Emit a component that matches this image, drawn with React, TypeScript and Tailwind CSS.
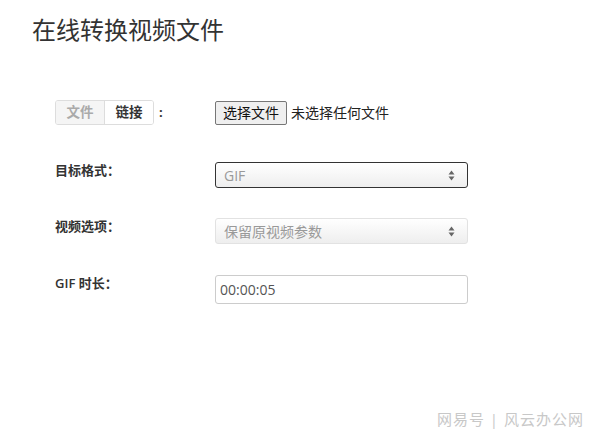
import React from "react";

const font = { fontFamily: '"Open Sans", "Noto Sans CJK SC", sans-serif' };

function Arrows() {
  return (
    <svg width="7" height="11" viewBox="0 0 7 11" className="shrink-0">
      <path d="M3.5 0.5 L6.5 4.5 L0.5 4.5 Z" fill="#666" />
      <path d="M3.5 10.5 L6.5 6.5 L0.5 6.5 Z" fill="#666" />
    </svg>
  );
}

export default function App() {
  return (
    <div className="w-[598px] h-[440px] bg-white relative overflow-hidden text-[#333]" style={font}>
      <h1 className="pl-[32px] pt-[14px] text-[24px] leading-[32px] font-normal text-[#333]">在线转换视频文件</h1>

      <div className="pl-[55px] pt-[54px] flex flex-col">
        {/* Row 1 */}
        <div className="flex items-center h-[25px]">
          <div className="w-[160px] flex items-center">
            <div className="flex h-[25px] border border-[#ddd] rounded-[3px] overflow-hidden text-[13.5px]">
              <div className="w-[49px] flex items-center justify-center bg-[#f5f5f5] text-[#aaa] font-bold border-r border-[#ddd]">文件</div>
              <div className="w-[48px] flex items-center justify-center bg-white text-[#333] font-bold">链接</div>
            </div>
            <span className="ml-[5px] text-[13px] font-bold">:</span>
          </div>
          <div className="flex items-center text-[14px]">
            <div className="h-[24px] w-[72px] flex items-center justify-center bg-[#efefef] border border-[#767676] rounded-[2px] text-[#111]">选择文件</div>
            <span className="ml-[4px] text-[#222]">未选择任何文件</span>
          </div>
        </div>

        {/* Row 2 */}
        <div className="flex items-start mt-[37px]">
          <div className="w-[160px] text-[13px] font-bold leading-[16px] text-[#333]">目标格式：</div>
          <div className="w-[253px] h-[26px] border border-[#333] rounded-[3px] bg-gradient-to-b from-white to-[#eee] flex items-center justify-between pl-[8px] pr-[12px] text-[14px] text-[#999]">
            <span>GIF</span>
            <Arrows />
          </div>
        </div>

        {/* Row 3 */}
        <div className="flex items-start mt-[30px]">
          <div className="w-[160px] text-[13px] font-bold leading-[16px] text-[#333]">视频选项：</div>
          <div className="w-[253px] h-[26px] border border-[#e2e2e2] rounded-[3px] bg-gradient-to-b from-white to-[#eee] flex items-center justify-between pl-[8px] pr-[12px] text-[14px] text-[#999]">
            <span>保留原视频参数</span>
            <Arrows />
          </div>
        </div>

        {/* Row 4 */}
        <div className="flex items-start mt-[31px]">
          <div className="w-[160px] text-[13px] font-semibold leading-[16px] text-[#333]">GIF 时长：</div>
          <div className="w-[253px] h-[29px] border border-[#ccc] rounded-[3px] bg-white flex items-center pl-[4px] text-[14px] text-[#555]">
            00:00:05
          </div>
        </div>
      </div>

      <div className="absolute right-[14px] bottom-[10px] text-[15px] text-[#c8c8c8] tracking-[1px]" style={{ textShadow: "0 0 2px #fff" }}>
        网易号 | 风云办公网
      </div>
    </div>
  );
}
